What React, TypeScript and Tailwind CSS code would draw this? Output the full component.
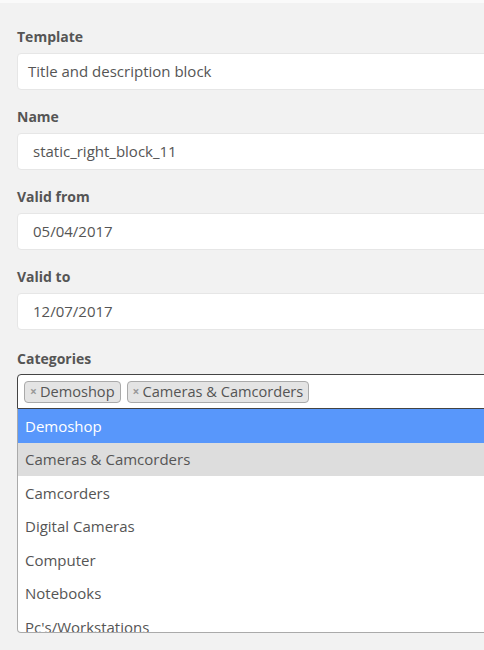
const fields = [
  { label: 'Template', value: 'Title and description block', pad: 'pl-[10px]' },
  { label: 'Name', value: 'static_right_block_11', pad: 'pl-[15px]' },
  { label: 'Valid from', value: '05/04/2017', pad: 'pl-[15px]' },
  { label: 'Valid to', value: '12/07/2017', pad: 'pl-[15px]' },
];

const options = [
  'Demoshop',
  'Cameras & Camcorders',
  'Camcorders',
  'Digital Cameras',
  'Computer',
  'Notebooks',
  "Pc's/Workstations",
  'Printers',
];

function Tag({ text }: { text: string }) {
  return (
    <span className="flex items-center h-[22px] px-[5px] bg-[#e4e4e4] border border-[#aaa] rounded-[4px] text-[14.6px] text-[#555] leading-none">
      <span className="text-[#999] text-[12px] mr-[3px] font-bold">×</span>
      {text}
    </span>
  );
}

export default function App() {
  return (
    <div
      className="w-[484px] h-[650px] overflow-hidden bg-[#f2f2f2] border-t-[3px] border-[#fafafa]"
      style={{ fontFamily: '"Open Sans", sans-serif' }}
    >
      <div className="w-[600px] pl-[17px] pt-[24px]">
        {fields.map((f) => (
          <div key={f.label} className="mb-[17px]">
            <label className="block text-[14px] font-bold text-[#555] leading-[20px] mb-[6px]">
              {f.label}
            </label>
            <div
              className={`h-[37px] flex items-center bg-white border border-[#e6e6e6] rounded-[4px] text-[15px] text-[#555] ${f.pad}`}
            >
              {f.value}
            </div>
          </div>
        ))}

        <label className="block pt-[2px] text-[14px] font-bold text-[#555] leading-[20px] mb-[5px]">
          Categories
        </label>
        <div className="h-[35px] flex items-center gap-[6px] pl-[6px] bg-white border border-[#444] rounded-t-[4px]">
          <Tag text="Demoshop" />
          <Tag text="Cameras & Camcorders" />
        </div>
        <div className="h-[224px] overflow-hidden bg-white border border-t-0 border-[#aaa] rounded-b-[4px]">
          {options.map((o, i) => (
            <div
              key={o}
              className={`h-[33.5px] flex items-center pl-[7px] text-[15px] ${
                i === 0
                  ? 'bg-[#5897fb] text-white'
                  : i === 1
                    ? 'bg-[#ddd] text-[#555]'
                    : 'text-[#555]'
              }`}
            >
              {o}
            </div>
          ))}
        </div>
      </div>
    </div>
  );
}
